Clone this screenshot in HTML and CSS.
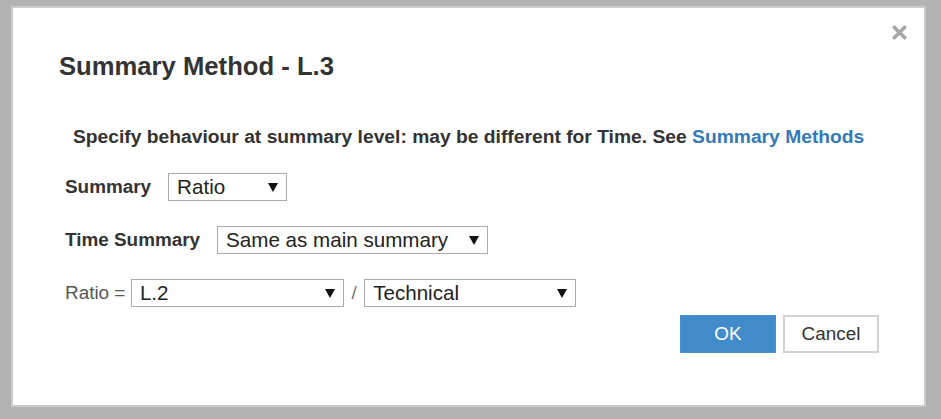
FILE: index.html
```html
<!DOCTYPE html>
<html lang="en">
<head>
    <meta charset="UTF-8">
    <meta name="viewport" content="width=device-width, initial-scale=1.0">
    <title>Summary Method - L.3</title>
    <link rel="stylesheet" href="styles.css">
</head>
<body>
    <div class="dialog">
        <!-- close button -->
        <a class="close" href="#" title="Close">
            <svg width="15" height="15" viewBox="0 0 15 15">
                <path d="M2.5 2.5 L12.5 12.5 M12.5 2.5 L2.5 12.5" stroke="#a6a6a6" stroke-width="3.6" stroke-linecap="square"/>
            </svg>
        </a>

        <h2 class="title">Summary Method - L.3</h2>

        <p class="intro">Specify behaviour at summary level: may be different for Time. See <a href="#">Summary Methods</a></p>

        <div class="row">
            <span class="label">Summary</span>
            <div class="select w-summary"><span>Ratio</span><i class="arrow"></i></div>
        </div>

        <div class="row">
            <span class="label">Time Summary</span>
            <div class="select w-time"><span>Same as main summary</span><i class="arrow"></i></div>
        </div>

        <div class="row ratio">
            <span class="plain">Ratio =</span>
            <div class="select w-num"><span>L.2</span><i class="arrow"></i></div>
            <span class="slash">/</span>
            <div class="select w-den"><span>Technical</span><i class="arrow"></i></div>
        </div>

        <div class="buttons">
            <button class="btn btn-ok">OK</button>
            <button class="btn btn-cancel">Cancel</button>
        </div>
    </div>
</body>
</html>
```

FILE: styles.css
```css
body {
    margin: 0;
    background-color: #b3b3b3;
    font-family: "Liberation Sans", Arial, sans-serif;
    color: #333;
}

.dialog {
    position: relative;
    box-sizing: border-box;
    width: 915px;
    height: 401px;
    margin: 6px 0 0 11px;
    padding: 43px 45px 0 46px;
    background-color: #fff;
    border: 2px solid #cbcbcb;
}

.close {
    position: absolute;
    top: 17px;
    right: 17px;
    display: block;
    width: 15px;
    height: 15px;
}

.close svg {
    display: block;
}

.title {
    margin: 0;
    font-size: 25.65px;
    line-height: 30px;
    font-weight: bold;
    color: #333;
}

.intro {
    margin: 45px 0 0 14px;
    font-size: 19.25px;
    line-height: 22px;
    font-weight: bold;
    color: #333;
}

.intro a {
    color: #337ab7;
    text-decoration: none;
}

.row {
    display: flex;
    align-items: center;
    height: 28px;
    margin: 25px 0 0 6px;
    gap: 17px;
    font-size: 18.9px;
}

.row + .row {
    margin-top: 25px;
}

.label {
    font-weight: bold;
    color: #333;
}

.ratio {
    gap: 5.5px;
}

.plain {
    color: #555;
}

.slash {
    color: #777;
    margin: 0 2px;
}

.select {
    box-sizing: border-box;
    display: flex;
    align-items: center;
    justify-content: space-between;
    height: 28px;
    padding: 0 8px 0 8px;
    border: 1px solid #aaa;
    background-color: #fff;
    font-size: 20.6px;
    color: #222;
}

.arrow {
    width: 0;
    height: 0;
    border-left: 5px solid transparent;
    border-right: 5px solid transparent;
    border-top: 9px solid #111;
}

.w-summary { width: 119px; }
.w-time { width: 271px; }
.w-num { width: 213px; }
.w-den { width: 212px; }

.buttons {
    display: flex;
    justify-content: flex-end;
    gap: 7px;
    margin-top: 8px;
}

.btn {
    box-sizing: border-box;
    width: 96px;
    height: 38px;
    font-family: "Liberation Sans", Arial, sans-serif;
    font-size: 18.9px;
    cursor: pointer;
}

.btn-ok {
    background-color: #428bca;
    border: 1px solid #4a90cc;
    color: #fff;
}

.btn-cancel {
    background-color: #fff;
    border: 2px solid #d2d2d2;
    color: #333;
}
```
